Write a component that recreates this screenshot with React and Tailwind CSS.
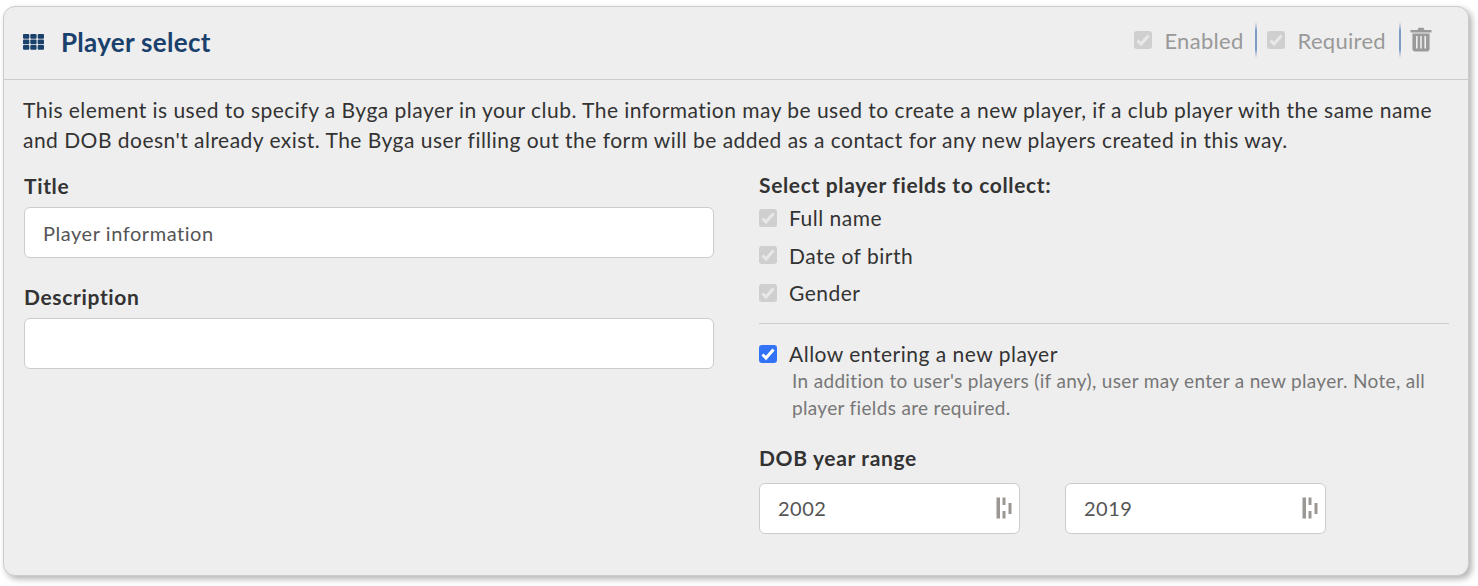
const Check = ({ on }) => (
  <span className={`flex h-[18px] w-[18px] shrink-0 items-center justify-center rounded-[3px] ${on ? "bg-[#3273f6]" : "bg-[#cfcfcf]"}`}>
    <svg width="16" height="16" viewBox="0 0 16 16" fill="none">
      <path d="M2.5 8.5 L6 12 L13.5 3.5" stroke={on ? "#ffffff" : "#e8e8e8"} strokeWidth="3" />
    </svg>
  </span>
);

const Grid = () => (
  <svg width="21" height="16" viewBox="0 0 21 16" fill="#1a406c">
    {[0, 5.5, 11].map((y) =>
      [0, 7.3, 14.7].map((x) => <rect key={`${x}-${y}`} x={x} y={y} width="6.3" height="4.8" rx="1" />)
    )}
  </svg>
);

const Trash = () => (
  <svg width="22" height="25" viewBox="0 0 22 25" fill="#9a9a9a">
    <path d="M7.5 3 L8.6 0.8 H13.4 L14.5 3 H21.5 V5.6 H0.5 V3 Z" />
    <path fillRule="evenodd" d="M2.4 6.6 H19.6 V22 a2.4 2.4 0 0 1 -2.4 2.4 H4.8 a2.4 2.4 0 0 1 -2.4 -2.4 Z M6 9 V21.5 H7.6 V9 Z M10.2 9 V21.5 H11.8 V9 Z M14.4 9 V21.5 H16 V9 Z" />
  </svg>
);

const Stepper = () => (
  <svg width="16" height="22" viewBox="0 0 16 22" fill="#9b9793">
    <path d="M0.5 0.5 H4 V21.5 H0.5 Z" />
    <path d="M6.5 0.5 H9.5 V8 H6.5 Z M6.5 14 H9.5 V21.5 H6.5 Z" />
    <path d="M12.5 6 H15.5 V17 H12.5 Z" />
  </svg>
);

const Divider = () => (
  <span className="block h-[36px] w-[2px] bg-[linear-gradient(to_bottom,transparent,#7a9bc8_25%,#7a9bc8_75%,transparent)]" />
);

const Field = ({ label, value }) => (
  <div>
    <div className="text-[21px] font-bold leading-[24px] tracking-[0.65px] text-[#333333]">{label}</div>
    <div className="mt-[9px] flex h-[51px] items-center rounded-[6px] border border-[#cccccc] bg-white pl-[18px] text-[20px] tracking-[0.55px] text-[#555555]">
      {value}
    </div>
  </div>
);

const NumberBox = ({ value }) => (
  <div className="flex h-[51px] w-[261px] items-center justify-between rounded-[6px] border border-[#cccccc] bg-white pl-[18px] pr-[7px] text-[20px] tracking-[0.5px] text-[#555555]">
    <span>{value}</span>
    <Stepper />
  </div>
);

const Option = ({ label }) => (
  <div className="flex h-[37.5px] items-center gap-[12px] text-[21px] tracking-[0.5px] text-[#333333]">
    <Check />
    <span>{label}</span>
  </div>
);

export default function App() {
  return (
    <div className="h-[586px] w-[1478px] bg-white pl-[3px] pt-[6px] font-['Lato',sans-serif]">
      <div className="h-[570px] w-[1466px] rounded-[12px] border border-[#cccccc] bg-[#eeeeee] shadow-[3px_3px_6px_rgba(0,0,0,0.3)]">
        <div className="flex h-[73px] items-center justify-between border-b border-[#cccccc] pb-[2px] pl-[19px] pr-[36px]">
          <div className="flex items-center gap-[17px] text-[26px] font-bold tracking-[0.3px] text-[#1a406c]">
            <Grid />
            <span>Player select</span>
          </div>
          <div className="mb-[4px] flex items-center text-[22px] tracking-[0.3px] text-[#999999]">
            <Check />
            <span className="ml-[12px]">Enabled</span>
            <span className="ml-[11px]"><Divider /></span>
            <span className="ml-[10px]"><Check /></span>
            <span className="ml-[13px]">Required</span>
            <span className="ml-[13px]"><Divider /></span>
            <span className="mb-[2px] ml-[9px]"><Trash /></span>
          </div>
        </div>
        <div className="px-[20px] pt-[15px]">
          <p className="-ml-px text-[21px] leading-[30px] tracking-[0.47px] text-[#333333]">
            This element is used to specify a Byga player in your club. The information may be used to create a new player, if a club player with the same name and DOB doesn't already exist. The Byga user filling out the form will be added as a contact for any new players created in this way.
          </p>
          <div className="mt-[12px] flex">
            <div className="flex w-[690px] shrink-0 flex-col gap-[27px] pt-[7px]">
              <Field label="Title" value="Player information" />
              <Field label="Description" value="" />
            </div>
            <div className="ml-[45px] w-[690px] shrink-0 pt-[6px]">
              <div className="text-[21px] font-bold leading-[24px] tracking-[0.65px] text-[#333333]">Select player fields to collect:</div>
              <div className="mt-[2px]">
                <Option label="Full name" />
                <Option label="Date of birth" />
                <Option label="Gender" />
              </div>
              <hr className="mt-[11px] border-[#cccccc]" />
              <div className="mt-[15px] flex items-center gap-[12px] text-[21px] leading-[30px] tracking-[0.5px] text-[#333333]">
                <Check on />
                <span>Allow entering a new player</span>
              </div>
              <p className="-mt-[2px] ml-[33px] w-[650px] text-[19px] leading-[27px] tracking-[0.33px] text-[#777777]">
                In addition to user's players (if any), user may enter a new player. Note, all player fields are required.
              </p>
              <div className="mt-[25px] text-[21px] font-bold leading-[24px] tracking-[0.65px] text-[#333333]">DOB year range</div>
              <div className="mt-[13px] flex gap-[45px]">
                <NumberBox value="2002" />
                <NumberBox value="2019" />
              </div>
            </div>
          </div>
        </div>
      </div>
    </div>
  );
}
